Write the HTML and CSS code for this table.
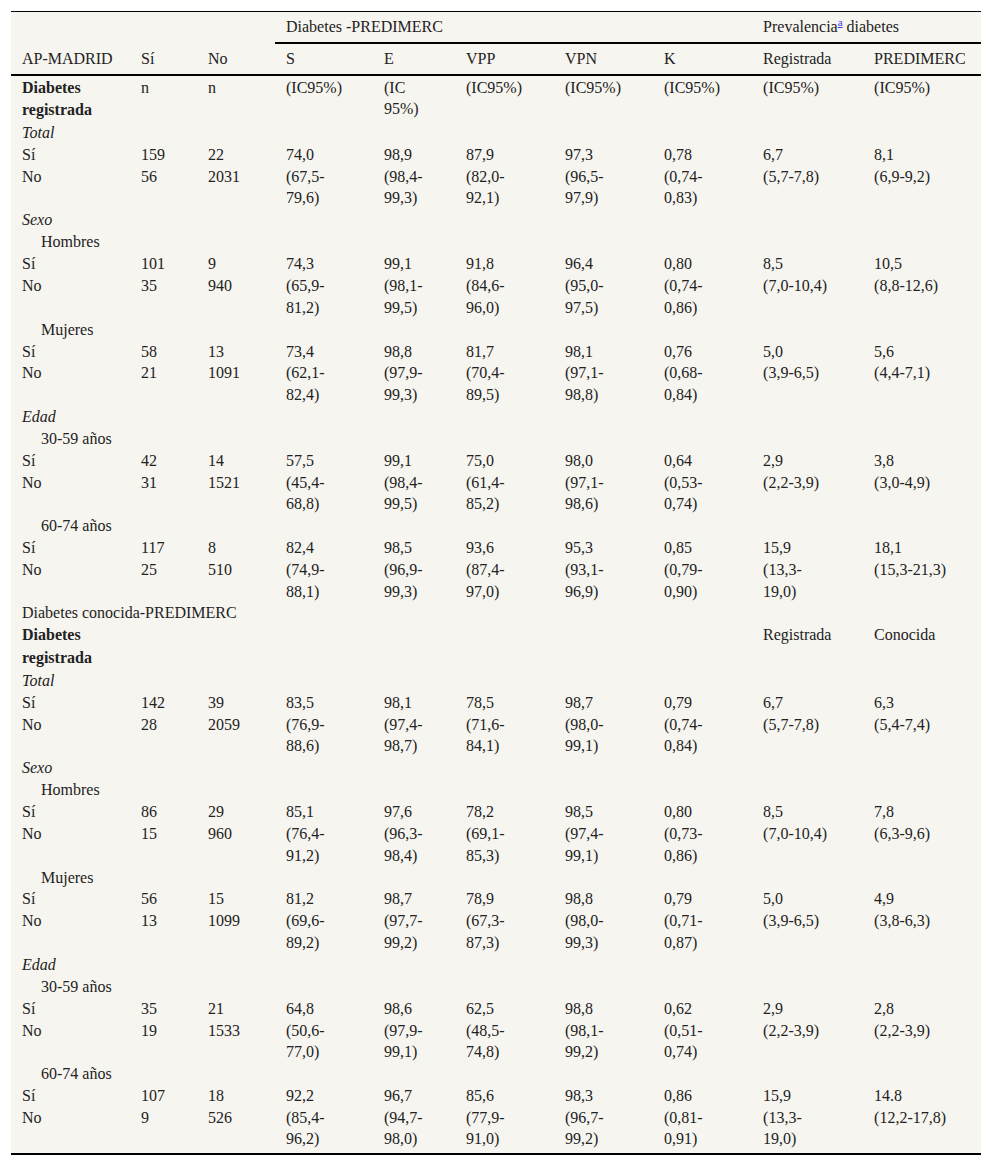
FILE: index.html
```
<!DOCTYPE html>
<html lang="es">
<head>
<meta charset="utf-8">
<title>Tabla</title>
<link rel="stylesheet" href="styles.css">
</head>
<body>
<div class="wrap">
<table class="tbl">
<colgroup>
<col class="c1"><col class="c2"><col class="c3"><col class="c4"><col class="c5"><col class="c6"><col class="c7"><col class="c8"><col class="c9"><col class="c10">
</colgroup>
<thead>
<tr class="hr1"><th></th><th></th><th></th><th colspan="5" class="grp">Diabetes -PREDIMERC</th><th colspan="2" class="grp">Prevalencia<sup class="ref"><a href="#">a</a></sup> diabetes</th></tr>
<tr class="hr2"><th>AP-MADRID</th><th>Sí</th><th>No</th><th>S</th><th>E</th><th>VPP</th><th>VPN</th><th>K</th><th>Registrada</th><th>PREDIMERC</th></tr>
</thead>
<tbody>
<tr><td class="b">Diabetes registrada</td><td>n</td><td>n</td><td>(IC95%)</td><td>(IC 95%)</td><td>(IC95%)</td><td>(IC95%)</td><td>(IC95%)</td><td>(IC95%)</td><td>(IC95%)</td></tr>
<tr><td colspan="10" class="i">Total</td></tr>
<tr><td>Sí</td><td>159</td><td>22</td><td>74,0</td><td>98,9</td><td>87,9</td><td>97,3</td><td>0,78</td><td>6,7</td><td>8,1</td></tr>
<tr><td>No</td><td>56</td><td>2031</td><td>(67,5-79,6)</td><td>(98,4-99,3)</td><td>(82,0-92,1)</td><td>(96,5-97,9)</td><td>(0,74-0,83)</td><td>(5,7-7,8)</td><td>(6,9-9,2)</td></tr>
<tr><td colspan="10" class="i">Sexo</td></tr>
<tr><td colspan="10" class="ind">Hombres</td></tr>
<tr><td>Sí</td><td>101</td><td>9</td><td>74,3</td><td>99,1</td><td>91,8</td><td>96,4</td><td>0,80</td><td>8,5</td><td>10,5</td></tr>
<tr><td>No</td><td>35</td><td>940</td><td>(65,9-81,2)</td><td>(98,1-99,5)</td><td>(84,6-96,0)</td><td>(95,0-97,5)</td><td>(0,74-0,86)</td><td>(7,0-10,4)</td><td>(8,8-12,6)</td></tr>
<tr><td colspan="10" class="ind">Mujeres</td></tr>
<tr><td>Sí</td><td>58</td><td>13</td><td>73,4</td><td>98,8</td><td>81,7</td><td>98,1</td><td>0,76</td><td>5,0</td><td>5,6</td></tr>
<tr><td>No</td><td>21</td><td>1091</td><td>(62,1-82,4)</td><td>(97,9-99,3)</td><td>(70,4-89,5)</td><td>(97,1-98,8)</td><td>(0,68-0,84)</td><td>(3,9-6,5)</td><td>(4,4-7,1)</td></tr>
<tr><td colspan="10" class="i">Edad</td></tr>
<tr><td colspan="10" class="ind">30-59 años</td></tr>
<tr><td>Sí</td><td>42</td><td>14</td><td>57,5</td><td>99,1</td><td>75,0</td><td>98,0</td><td>0,64</td><td>2,9</td><td>3,8</td></tr>
<tr><td>No</td><td>31</td><td>1521</td><td>(45,4-68,8)</td><td>(98,4-99,5)</td><td>(61,4-85,2)</td><td>(97,1-98,6)</td><td>(0,53-0,74)</td><td>(2,2-3,9)</td><td>(3,0-4,9)</td></tr>
<tr><td colspan="10" class="ind">60-74 años</td></tr>
<tr><td>Sí</td><td>117</td><td>8</td><td>82,4</td><td>98,5</td><td>93,6</td><td>95,3</td><td>0,85</td><td>15,9</td><td>18,1</td></tr>
<tr><td>No</td><td>25</td><td>510</td><td>(74,9-88,1)</td><td>(96,9-99,3)</td><td>(87,4-97,0)</td><td>(93,1-96,9)</td><td>(0,79-0,90)</td><td>(13,3-19,0)</td><td>(15,3-21,3)</td></tr>
<tr><td colspan="10">Diabetes conocida-PREDIMERC</td></tr>
<tr><td class="b">Diabetes registrada</td><td></td><td></td><td></td><td></td><td></td><td></td><td></td><td>Registrada</td><td>Conocida</td></tr>
<tr><td colspan="10" class="i">Total</td></tr>
<tr><td>Sí</td><td>142</td><td>39</td><td>83,5</td><td>98,1</td><td>78,5</td><td>98,7</td><td>0,79</td><td>6,7</td><td>6,3</td></tr>
<tr><td>No</td><td>28</td><td>2059</td><td>(76,9-88,6)</td><td>(97,4-98,7)</td><td>(71,6-84,1)</td><td>(98,0-99,1)</td><td>(0,74-0,84)</td><td>(5,7-7,8)</td><td>(5,4-7,4)</td></tr>
<tr><td colspan="10" class="i">Sexo</td></tr>
<tr><td colspan="10" class="ind">Hombres</td></tr>
<tr><td>Sí</td><td>86</td><td>29</td><td>85,1</td><td>97,6</td><td>78,2</td><td>98,5</td><td>0,80</td><td>8,5</td><td>7,8</td></tr>
<tr><td>No</td><td>15</td><td>960</td><td>(76,4-91,2)</td><td>(96,3-98,4)</td><td>(69,1-85,3)</td><td>(97,4-99,1)</td><td>(0,73-0,86)</td><td>(7,0-10,4)</td><td>(6,3-9,6)</td></tr>
<tr><td colspan="10" class="ind">Mujeres</td></tr>
<tr><td>Sí</td><td>56</td><td>15</td><td>81,2</td><td>98,7</td><td>78,9</td><td>98,8</td><td>0,79</td><td>5,0</td><td>4,9</td></tr>
<tr><td>No</td><td>13</td><td>1099</td><td>(69,6-89,2)</td><td>(97,7-99,2)</td><td>(67,3-87,3)</td><td>(98,0-99,3)</td><td>(0,71-0,87)</td><td>(3,9-6,5)</td><td>(3,8-6,3)</td></tr>
<tr><td colspan="10" class="i">Edad</td></tr>
<tr><td colspan="10" class="ind">30-59 años</td></tr>
<tr><td>Sí</td><td>35</td><td>21</td><td>64,8</td><td>98,6</td><td>62,5</td><td>98,8</td><td>0,62</td><td>2,9</td><td>2,8</td></tr>
<tr><td>No</td><td>19</td><td>1533</td><td>(50,6-77,0)</td><td>(97,9-99,1)</td><td>(48,5-74,8)</td><td>(98,1-99,2)</td><td>(0,51-0,74)</td><td>(2,2-3,9)</td><td>(2,2-3,9)</td></tr>
<tr><td colspan="10" class="ind">60-74 años</td></tr>
<tr><td>Sí</td><td>107</td><td>18</td><td>92,2</td><td>96,7</td><td>85,6</td><td>98,3</td><td>0,86</td><td>15,9</td><td>14.8</td></tr>
<tr class="last"><td>No</td><td>9</td><td>526</td><td>(85,4-96,2)</td><td>(94,7-98,0)</td><td>(77,9-91,0)</td><td>(96,7-99,2)</td><td>(0,81-0,91)</td><td>(13,3-19,0)</td><td>(12,2-17,8)</td></tr>
</tbody>
</table>
</div>
</body>
</html>
```
FILE: styles.css
```
html, body {
  margin: 0;
  padding: 0;
  background: #ffffff;
}
.wrap {
  padding: 11px 11px 10px 11px;
}
.tbl {
  width: 970px;
  table-layout: fixed;
  border-collapse: separate;
  border-spacing: 0;
  background: #f7f5f0;
  font-family: "Liberation Serif", "Times New Roman", serif;
  font-size: 16px;
  line-height: 21.45px;
  color: #222222;
  border-top: 1px solid #000000;
  border-bottom: 2px solid #000000;
}
.c1 { width: 119px; }
.c2 { width: 67px; }
.c3 { width: 78px; }
.c4 { width: 98px; }
.c5 { width: 82px; }
.c6 { width: 99px; }
.c7 { width: 99px; }
.c8 { width: 99px; }
.c9 { width: 111px; }
.c10 { width: 118px; }
.tbl th,
.tbl td {
  text-align: left;
  vertical-align: top;
  font-weight: normal;
  padding: 0.5px 11px 0 11px;
}
.tbl th {
  padding-top: 4px;
  padding-bottom: 4px;
  line-height: 21.5px;
}
.hr1 .grp {
  border-bottom: 2px solid #000000;
}
.hr2 th {
  padding-bottom: 5px;
  border-bottom: 2px solid #000000;
}
.tbl td:nth-child(4) { padding-right: 20px; }
.tbl td:nth-child(5) { padding-right: 13px; }
.tbl td:nth-child(6) { padding-right: 20px; }
.tbl td:nth-child(7) { padding-right: 20px; }
.tbl td:nth-child(8) { padding-right: 20px; }
.tbl td:nth-child(9) { padding-right: 30px; }
.tbl td:nth-child(10) { padding-right: 11px; }
.tbl td.b {
  font-weight: bold;
  line-height: 22.5px;
}
.tbl td.i {
  font-style: italic;
}
.tbl td.ind {
  padding-left: 30px;
}
.tbl tr.last td {
  padding-bottom: 3px;
}
.ref {
  font-size: 11px;
  line-height: 0;
  vertical-align: 6px;
}
.ref a {
  color: #3c3cf0;
  text-decoration: underline;
}
```
